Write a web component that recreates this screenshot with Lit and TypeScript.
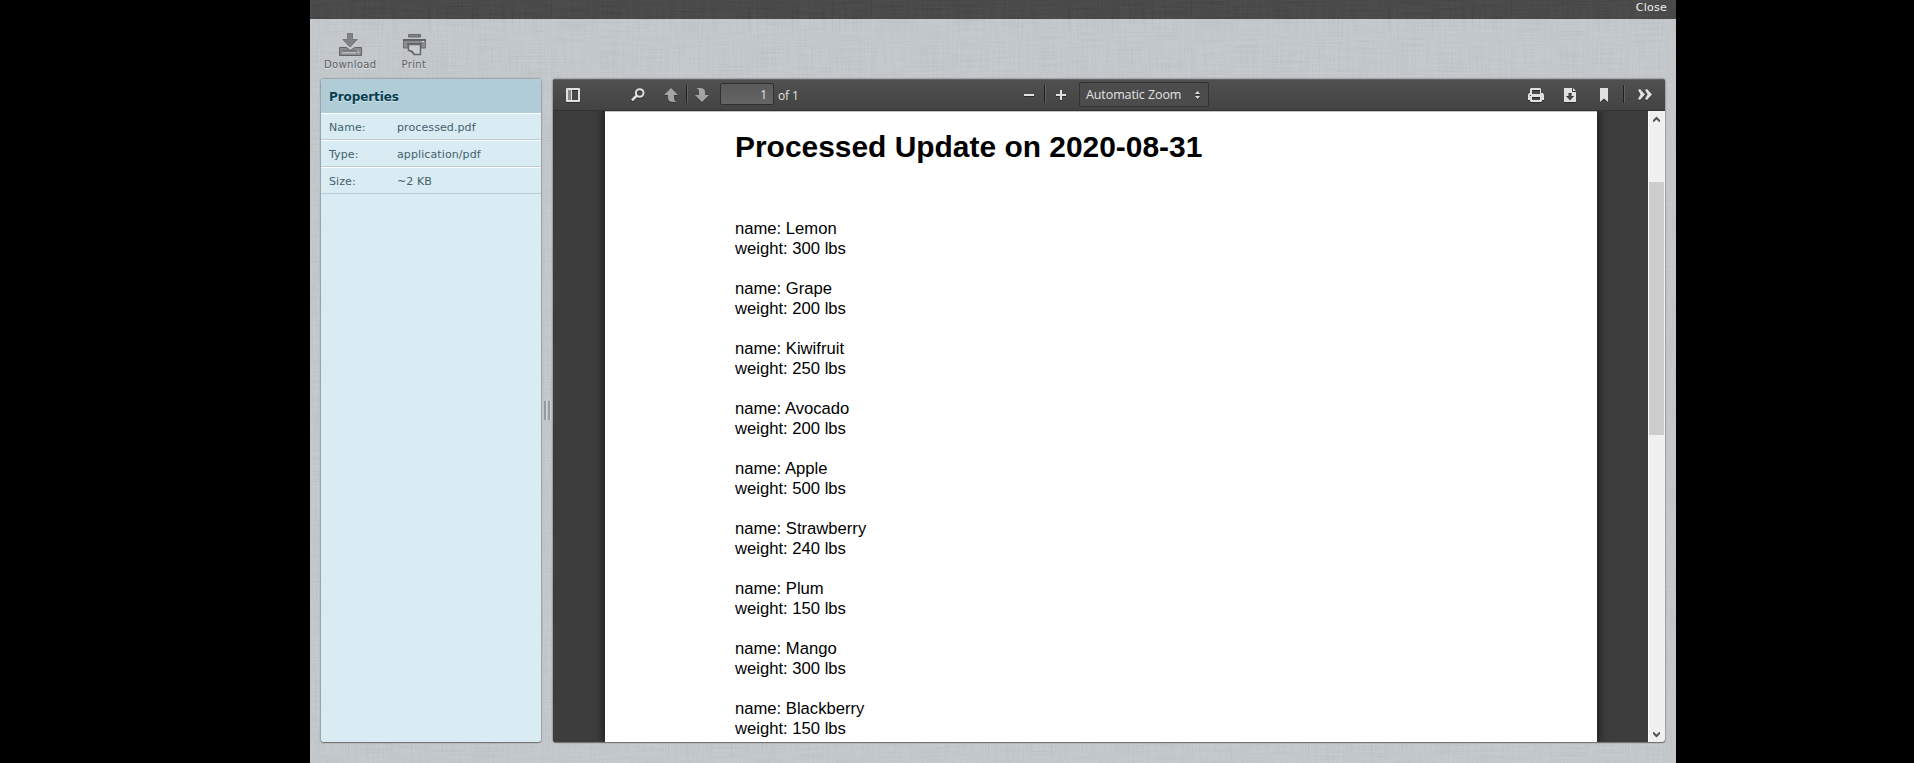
import { LitElement, html, css, svg } from "lit";
import { customElement } from "lit/decorators.js";

const FRUIT: [string, number][] = [
  ["Lemon", 300], ["Grape", 200], ["Kiwifruit", 250], ["Avocado", 200], ["Apple", 500],
  ["Strawberry", 240], ["Plum", 150], ["Mango", 300], ["Blackberry", 150],
];

const PROPS = [["Name:", "processed.pdf"], ["Type:", "application/pdf"], ["Size:", "~2 KB"]];

const icon = (cls: string, w: number, h: number, body: unknown) =>
  html`<svg class="ic ${cls}" width=${w} height=${h} viewBox="0 0 ${w} ${h}">${body}</svg>`;

@customElement("linen-texture")
class LinenTexture extends LitElement {
  static styles = css`
    :host { position: absolute; inset: 0; pointer-events: none; }
    svg { display: block; width: 100%; height: 100%; }
  `;
  render() {
    return html`<svg>
      <filter id="h" x="0" y="0" width="100%" height="100%">
        <feTurbulence type="fractalNoise" baseFrequency="0.025 0.8" numOctaves="2" seed="3"/>
        <feColorMatrix values="1.6 0 0 0 -.1  1.6 0 0 0 -.1  1.6 0 0 0 -.1  0 0 0 0 .055"/>
      </filter>
      <filter id="v" x="0" y="0" width="100%" height="100%">
        <feTurbulence type="fractalNoise" baseFrequency="0.8 0.025" numOctaves="2" seed="8"/>
        <feColorMatrix values="1.6 0 0 0 -.1  1.6 0 0 0 -.1  1.6 0 0 0 -.1  0 0 0 0 .055"/>
      </filter>
      <rect width="100%" height="100%" filter="url(#h)"/>
      <rect width="100%" height="100%" filter="url(#v)"/>
    </svg>`;
  }
}

@customElement("app-root")
class AppRoot extends LitElement {
  static styles = css`
    :host { display: block; height: 763px; background: #000; overflow: hidden; font-family: "DejaVu Sans", sans-serif; }
    * { box-sizing: border-box; }
    .window { position: relative; width: 1366px; height: 763px; margin-left: 310px; background: #c0c5c9; display: flex; flex-direction: column; }
    .top { position: relative; height: 19px; flex: none; background: #393939; color: #f2f2f2; font-size: 11px; line-height: 16px; text-align: right; padding-right: 9px; letter-spacing: .25px; }
    .actions { position: relative; height: 60px; display: flex; padding: 14px 0 0 14px; gap: 25px; color: #5d6064; font-size: 10px; line-height: 12px; text-shadow: 0 1px 0 #dde0e2; }
    .action { display: flex; flex-direction: column; align-items: center; letter-spacing: .35px; white-space: nowrap; }
    .action svg { height: 23px; margin: 0 0 3px 1px; }
    .main { position: relative; display: flex; height: 663px; padding: 0 11px; }
    .props { width: 220px; height: 100%; background: #d9ebf3; border-radius: 3px; overflow: hidden; color: #43616d; font-size: 11px; }
    .shadow { border-radius: 3px; box-shadow: 0 0 2px #555, 0 1px 1px #777; }
    .props h2 { margin: 0; height: 34px; padding: 1px 8px 0; background: #b0ccd6; color: #083d4f; font-size: 12px; line-height: 34px; letter-spacing: -.1px; text-shadow: 0 1px 0 #d0e4ec; }
    .row { display: flex; height: 27px; border-top: 1px solid #fff; border-bottom: 1px solid #b6ced8; padding: 1px 0 0 8px; line-height: 26px; letter-spacing: .1px; }
    .row span { width: 68px; white-space: nowrap; }
    .row .val { width: auto; }
    .split { width: 12px; display: flex; align-items: center; justify-content: center; gap: 2px; }
    .split i { width: 2px; height: 19px; background: #929ba2; box-shadow: 1px 0 #d2d6d9; margin-top: -1px; }
    .viewer { width: 1112px; background: #3d3d3d; border-radius: 3px; overflow: hidden; display: flex; flex-direction: column; }
    .bar { height: 32px; flex: none; display: grid; grid-template-columns: 471px 184px 1fr; background: linear-gradient(#505050, #434343); border-bottom: 1px solid #333; box-shadow: inset 0 1px #626262; font-family: "Open Sans", sans-serif; font-size: 12px; color: #e3e3e3; position: relative; }
    .bar > div { display: flex; align-items: center; height: 29px; padding-top: 3px; }
    .left { padding-left: 13px; }
    .right { justify-content: flex-end; padding-right: 13px; }
    .bar svg { flex: none; fill: #e0e0e0; filter: drop-shadow(0 1px 0 #2c2c2c); margin-top: -1px; }
    .sep { width: 2px; height: 18px; background: #202020; border-right: 1px solid #626262; margin-top: -3px; flex: none; }
    .search { margin-left: 51px; }
    .up { margin: 0 8px 0 19px; opacity: .6; }
    .down { margin: 0 11px 0 7px; opacity: .6; }
    .num { width: 54px; height: 22px; border: 1px solid #303030; border-radius: 2px; background: linear-gradient(#5a5a5a, #656565); text-align: right; padding-right: 6px; line-height: 21px; margin: -2px 4px 0 0; }
    .left span { letter-spacing: -.15px; }
    .plus { margin: 0 13px 0 10px; }
    .minus { margin-right: 10px; }
    .bar .select { flex: none; width: 130px; height: 25px; border: 1px solid #333; border-radius: 2px; background: #4c4c4c; display: flex; align-items: center; justify-content: space-between; padding: 0 8px 0 6px; margin-top: -1px; font-size: 12.5px; line-height: 25px; letter-spacing: -.1px; white-space: nowrap; }
    .select svg { margin-top: 1px; }
    .dl { margin: 0 24px 0 20px; }
    .right .sep { margin: -3px 13px 0 15px; }
    .body { position: relative; flex: 1; min-height: 0; display: flex; padding-left: 52px; overflow: hidden; background: #3d3d3d; }
    .page { width: 992px; background: #fff; box-shadow: 0 0 9px 2px rgba(0,0,0,.55); border-top: 1px solid #c4c4c4; padding-left: 130px; font-family: "Liberation Sans", Arial, sans-serif; font-size: 16.64px; line-height: 20px; color: #000; overflow: hidden; }
    .page h1 { margin: 17px 0 54px; font-size: 29.93px; line-height: 36px; white-space: nowrap; }
    .page p { margin: 0 0 20px; }
    .gap { flex: 1; }
    .scroll { width: 17px; background: #f0f0f0; display: flex; flex-direction: column; align-items: center; justify-content: space-between; padding: 5px 1px 4px 0; border-left: 1px solid #fff; position: relative; }
    .thumb { position: absolute; top: 71px; left: 0; width: 15px; height: 253px; background: #cdcdcd; }
  `;

  render() {
    const sep = html`<i class="sep"></i>`;
    return html`<div class="window">
      <linen-texture></linen-texture>
      <div class="top"><linen-texture></linen-texture>Close</div>
      <div class="actions">
        <div class="action">
          ${icon("", 23, 23, svg`
            <path fill="#7f8184" stroke="#6b6d70" stroke-width=".8" d="M8.500.5h5v6h4.800L11 14 3.800 6.500h4.700z"/>
            <path fill="#8a8c8e" stroke="#626467" d="M.5 14.500h7l4 3 4-3h7v8h-22z"/>
            <path fill="#b9bcbf" d="M3 18.500h14v2H3zM18.500 18.500h2v2h-2z"/>
            <path stroke="#606265" d="M3 18h14"/>`)}
          <span>Download</span>
        </div>
        <div class="action">
          ${icon("", 23, 23, svg`
            <path fill="#808285" stroke="#66686b" d="M5.500 1.500h12v2.500h-12z"/>
            <path fill="#8b8d90" stroke="#6b6d70" d="M.5 6.500h22v8.500h-4.500v-3.500H5V15H.5z"/>
            <path stroke="#616366" stroke-width="2" d="M0 7h23M4 11h15"/>
            <path fill="#c9cdd0" stroke="#65676a" stroke-width="1.500" d="M5.500 11.500h12v10h-6.500c-.5-2-2-4-5.500-4z"/>
            <path fill="#65676a" d="M5 17c4 0 6 2 6.500 5z"/>
            <path fill="#ddd" d="M19 8h2v1h-2z"/>`)}
          <span>Print</span>
        </div>
      </div>
      <div class="main">
        <div class="shadow"><div class="props">
          <h2>Properties</h2>
          ${PROPS.map(([k, v]) => html`<div class="row"><span>${k}</span><span class="val">${v}</span></div>`)}
        </div></div>
        <div class="split"><i></i><i></i></div>
        <div class="viewer shadow">
          <div class="bar">
            <div class="left">
              ${icon("", 14, 14, svg`<path fill-rule="evenodd" d="M1 0h12a1 1 0 0 1 1 1v12a1 1 0 0 1-1 1H1a1 1 0 0 1-1-1V1a1 1 0 0 1 1-1zM2 2v10h3V2zM6 2v10h6V2z"/><path fill="#888" d="M2 2h3v10H2z"/>`)}
              ${icon("search", 14, 14, svg`<circle cx="8.700" cy="5" r="3.800" fill="none" stroke="#e0e0e0" stroke-width="2"/><path d="M5.800 7.500L1 12.300" stroke="#e0e0e0" stroke-width="2.500"/>`)}
              ${icon("up", 14, 14, svg`<path d="M7 0l7 7h-4v3.500c0 1.500.8 2.700 2.500 3.500H9c-3 0-5-1.500-5-4V7H0z"/>`)}
              ${sep}
              ${icon("down", 14, 14, svg`<path d="M7 14l7-7h-4V4C10 1.500 8 0 5 0H1.500C3.200.8 4 2 4 3.500V7H0z"/>`)}
              <div class="num">1</div><span>of 1</span>
            </div>
            <div class="mid">
              ${icon("minus", 10, 10, svg`<path d="M0 4h10v2H0z"/>`)}
              ${sep}
              ${icon("plus", 10, 10, svg`<path d="M0 4h4V0h2v4h4v2H6v4H4V6H0z"/>`)}
              <div class="select">Automatic Zoom ${icon("", 5, 8, svg`<path d="M0 3L2.500 0 5 3zM0 5h5L2.500 8z"/>`)}</div>
            </div>
            <div class="right">
              ${icon("", 16, 14, svg`<path fill-rule="evenodd" d="M3 0h9l1 1v4h2l1 2v5h-2v1l-1 1H3l-1-1v-1H0V7l1-2h1V1zM4 2v4h8V2zM4 9v3h8V9zM2 7v1h1V7z"/>`)}
              ${icon("dl", 12, 14, svg`<path fill-rule="evenodd" d="M0 0h8v4h4v10H0zM4.500 5v3H2l4 4.500L10 8H7.500V5zM9 0l3 3H9z"/>`)}
              ${icon("", 8, 14, svg`<path d="M0 0h8v14l-4-3.500L0 14z"/>`)}
              ${sep}
              ${icon("", 14, 12, svg`<path d="M0 1l2-1 5 5.500L2 11l-2-1 2.500-4.500zM7 1l2-1 5 5.500L9 11l-2-1 2.500-4.500z"/>`)}
            </div>
          </div>
          <div class="body">
            <div class="page">
              <h1>Processed Update on 2020-08-31</h1>
              ${FRUIT.map(([n, w]) => html`<p>name: ${n}<br>weight: ${w} lbs</p>`)}
            </div>
            <div class="gap"></div>
            <div class="scroll">
              ${icon("", 7, 7, svg`<path d="M0 5.500L3.500 2 7 5.500" fill="none" stroke="#555" stroke-width="2"/>`)}
              <div class="thumb"></div>
              ${icon("", 7, 7, svg`<path d="M0 1.500L3.500 5 7 1.500" fill="none" stroke="#555" stroke-width="2"/>`)}
            </div>
          </div>
        </div>
      </div>
    </div>`;
  }
}
